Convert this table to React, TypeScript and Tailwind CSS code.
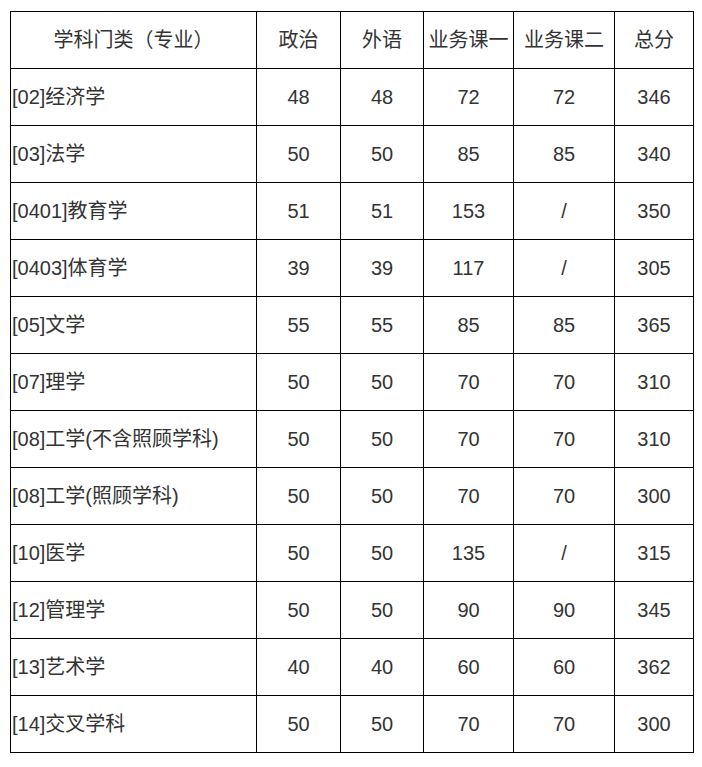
import React from "react";

const rows: [string, string, string, string, string, string][] = [
  ["[02]经济学", "48", "48", "72", "72", "346"],
  ["[03]法学", "50", "50", "85", "85", "340"],
  ["[0401]教育学", "51", "51", "153", "/", "350"],
  ["[0403]体育学", "39", "39", "117", "/", "305"],
  ["[05]文学", "55", "55", "85", "85", "365"],
  ["[07]理学", "50", "50", "70", "70", "310"],
  ["[08]工学(不含照顾学科)", "50", "50", "70", "70", "310"],
  ["[08]工学(照顾学科)", "50", "50", "70", "70", "300"],
  ["[10]医学", "50", "50", "135", "/", "315"],
  ["[12]管理学", "50", "50", "90", "90", "345"],
  ["[13]艺术学", "40", "40", "60", "60", "362"],
  ["[14]交叉学科", "50", "50", "70", "70", "300"],
];

const headers = ["学科门类（专业）", "政治", "外语", "业务课一", "业务课二", "总分"];

export default function App() {
  return (
    <div
      className="w-[702px] h-[767px] bg-white pt-[11px] pl-[10px] text-[20px] text-[#333333]"
      style={{ fontFamily: '"Liberation Sans", "Noto Sans CJK SC", sans-serif' }}
    >
      <div className="grid w-[684px] grid-cols-[246px_84px_83px_90px_101px_79px] border-l border-t border-black">
        {headers.map((h, i) => (
          <div
            key={i}
            className="flex h-[57px] items-center justify-center border-b border-r border-black leading-none"
          >
            {h}
          </div>
        ))}
        {rows.map((r, ri) =>
          r.map((c, ci) => (
            <div
              key={`${ri}-${ci}`}
              className={
                ci === 0
                  ? "flex h-[57px] items-center justify-start whitespace-nowrap border-b border-r border-black pl-[1px] leading-none"
                  : "flex h-[57px] items-center justify-center border-b border-r border-black leading-none"
              }
            >
              {c}
            </div>
          ))
        )}
      </div>
    </div>
  );
}
